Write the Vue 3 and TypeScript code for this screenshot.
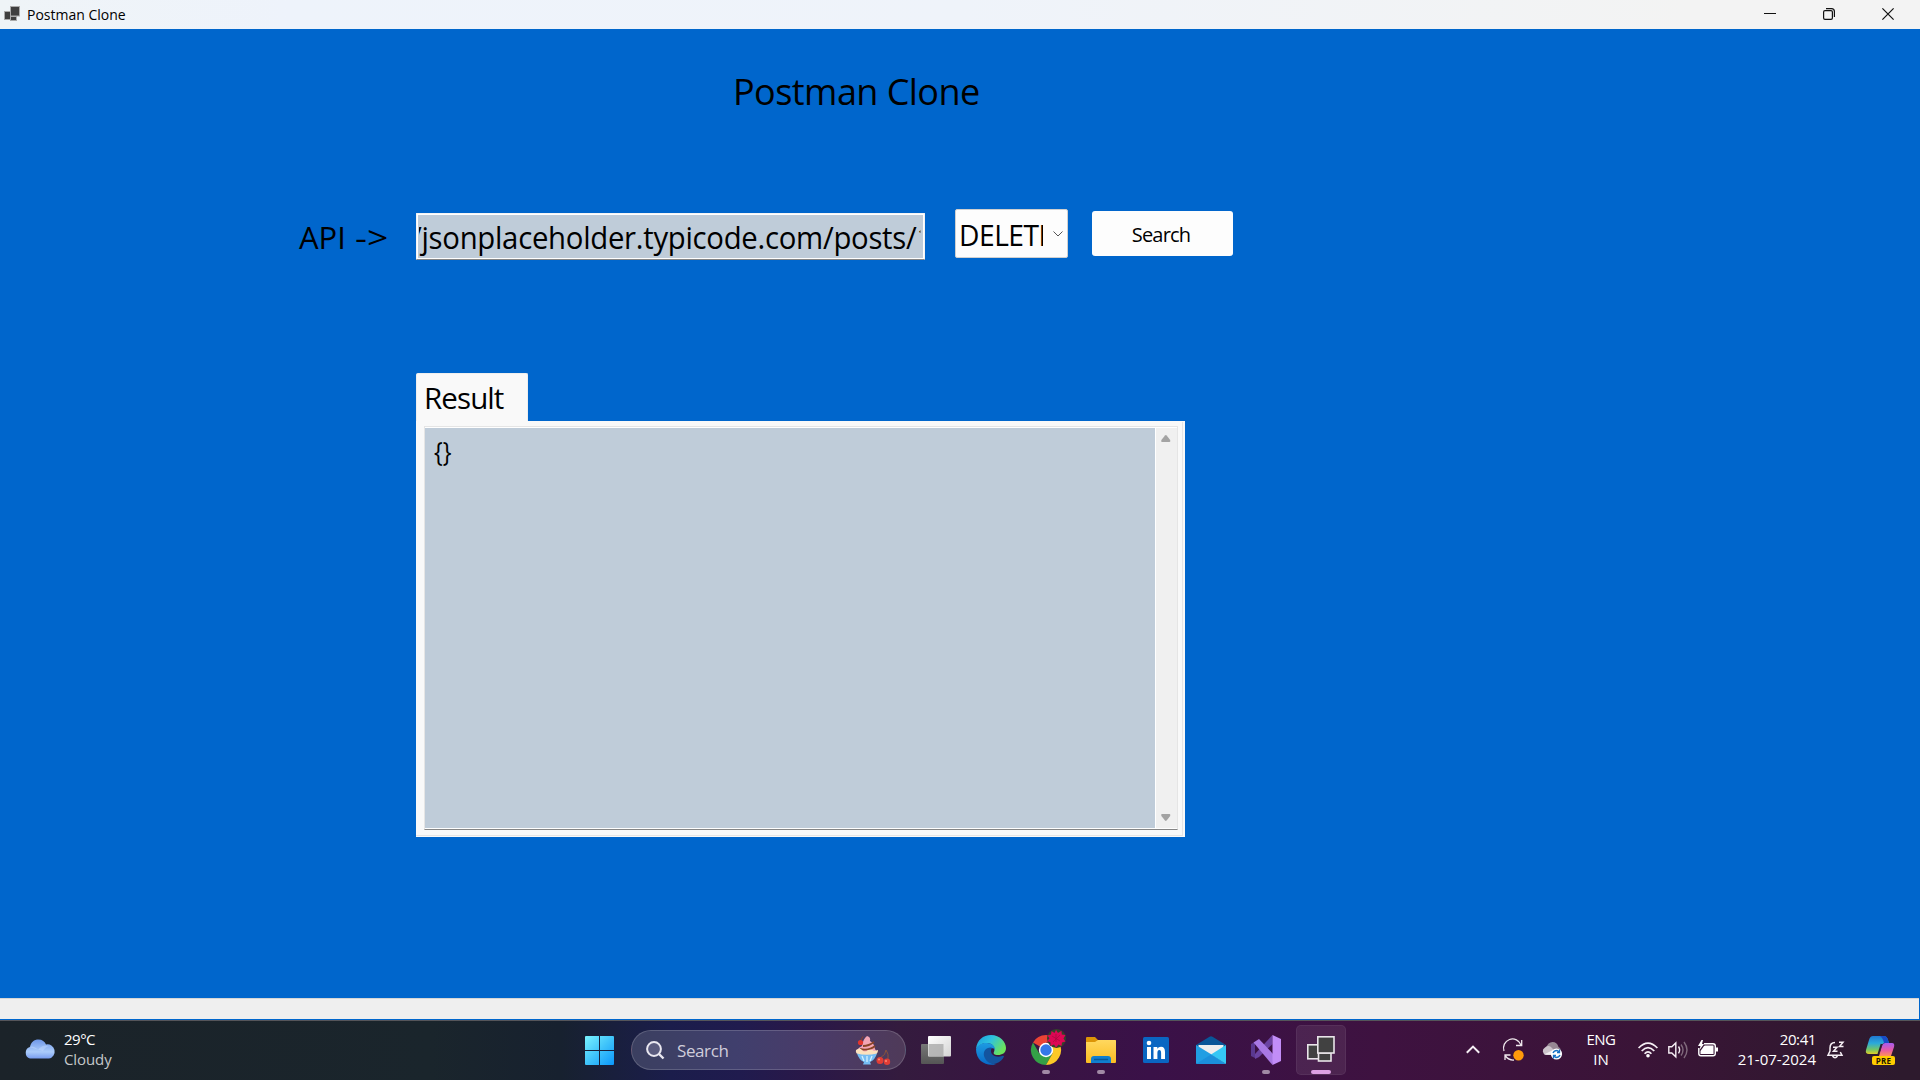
<script setup lang="ts">
import { ref } from 'vue'

const title = 'Postman Clone'
const endpoint = ref('/jsonplaceholder.typicode.com/posts/1')
const method = ref('DELETE')
const result = ref('{}')
</script>

<template>
  <div class="desktop">
    <header class="titlebar">
      <svg class="app-icon" width="17" height="16" viewBox="0 0 17 16">
        <g fill="#3f3f3f" stroke="#aaa" stroke-width="1">
          <rect x=".5" y="5.5" width="6" height="8" />
          <rect x="6.5" y=".5" width="9" height="9.5" />
          <rect x="6.5" y="10.5" width="6" height="4" />
        </g>
      </svg>
      <span class="window-title">{{ title }}</span>
      <div class="window-buttons">
        <svg width="12" height="12" viewBox="0 0 12 12"><path d="M0 5.5H12" stroke="#111" /></svg>
        <svg width="12" height="12" viewBox="0 0 12 12" fill="none" stroke="#111">
          <rect x=".6" y="2.6" width="8.8" height="8.8" rx="1.4" stroke-width="1.2" />
          <path d="M3 .6H8.5Q11.4.6 11.4 3.5V9" stroke-width="1.2" />
        </svg>
        <svg width="12" height="12" viewBox="0 0 12 12"><path d="M.4.4 11.6 11.6M11.6.4.4 11.6" stroke="#111" stroke-width="1.2" /></svg>
      </div>
    </header>

    <main class="form">
      <h1>{{ title }}</h1>
      <div class="request">
        <label class="api">API <span class="arrow">-&gt;</span></label>
        <div class="url"><span>{{ endpoint }}</span></div>
        <div class="method">
          <div class="method-text"><span>{{ method }}</span></div>
          <svg width="10" height="6" viewBox="0 0 10 6" fill="none" stroke="#555"><path d="M.5.5 5 5 9.5.5" /></svg>
        </div>
        <button class="go">Search</button>
      </div>
      <section class="tabs">
        <div class="tab"><span>Result</span></div>
        <div class="page">
          <div class="page-line">
            <div class="output">
              <div class="text"><span>{{ result }}</span></div>
              <div class="scroll">
                <svg width="10" height="7" viewBox="0 0 10 7"><path d="M4 .5Q4.8-.3 5.6.5L9.2 5Q9.6 7 8.6 7H.9Q-.2 7 .4 5Z" fill="#a3a3a3" /></svg>
                <svg width="10" height="7" viewBox="0 0 10 7"><path d="M4 6.5Q4.8 7.3 5.6 6.5L9.2 2Q9.6 0 8.6 0H.9Q-.2 0 .4 2Z" fill="#a3a3a3" /></svg>
              </div>
            </div>
          </div>
        </div>
      </section>
    </main>
    <div class="status"></div>

    <footer class="taskbar">
      <div class="weather">
        <svg width="31" height="20" viewBox="0 0 31 20">
          <defs>
            <linearGradient id="cl" x1="0" y1="0" x2="0" y2="1"><stop offset="0" stop-color="#6f97e8" /><stop offset=".65" stop-color="#abccfb" /><stop offset="1" stop-color="#789df0" /></linearGradient>
          </defs>
          <path d="M6 19.5A6 6 0 0 1 6 8C7 3 10 .5 14.500.5 18 .5 21 2.500 22 5.500A7 7 0 0 1 25 19.500Z" fill="url(#cl)" />
          <path d="M5 8Q10 6 14 11Q18 5 25 7Q21 8 19 12Z" fill="#c5dcff" opacity=".45" />
        </svg>
        <div class="weather-text"><span class="temp">29°C</span><span class="sky">Cloudy</span></div>
      </div>

      <div class="start">
        <svg width="29" height="29" viewBox="0 0 29 29">
          <defs><linearGradient id="win" x1="0" y1="0" x2="29" y2="29" gradientUnits="userSpaceOnUse"><stop stop-color="#7af3ff" /><stop offset=".5" stop-color="#40c4fa" /><stop offset="1" stop-color="#0b97fb" /></linearGradient></defs>
          <path d="M1 0H14V14H0V1Q0 0 1 0ZM15 0H28Q29 0 29 1V14H15ZM0 15H14V29H1Q0 29 0 28ZM15 15H29V28Q29 29 28 29H15Z" fill="url(#win)" />
        </svg>
      </div>

      <div class="search">
        <svg class="lens" width="19" height="19" viewBox="0 0 19 19" fill="none" stroke="#e9e7f0" stroke-width="2">
          <circle cx="8" cy="8" r="6.900" fill="#77779a" fill-opacity=".5" /><path d="M13 13 17.500 17.500" stroke-width="2.400" />
        </svg>
        <span>Search</span>
        <svg class="sundae" width="36" height="29" viewBox="0 0 36 29">
          <path d="M7 10Q8 3 12 0Q16 1 15 5Q19 7 20 13Q22 15 21 17H2Q1 13 7 10Z" fill="#f3a5b4" />
          <path d="M8 10Q14 10 19 6M5 13Q14 15 20 10" stroke="#8a4426" stroke-width="1.800" fill="none" />
          <path d="M1 14Q5 11 7 14Q10 17 13 14Q17 13 19 15L23 14Q23 19 18 19H5Q0 18 1 14Z" fill="#fbe1bd" />
          <path d="M2 17.500Q11 20 22 17.500Q20 24 15 26L16 28.500H8L9 26Q4 24 2 17.500Z" fill="#75bdf3" />
          <path d="M7 20 9 25M12 20V26M17 20 15 25" stroke="#d1f0ff" stroke-width="1.300" />
          <circle cx="5.500" cy="6.500" r="2.600" fill="#e3352d" /><path d="M6 4 8 .5" stroke="#8d4327" />
          <path d="M25 22Q31 19 31 14Q34 18 33 23" fill="none" stroke="#89533c" stroke-width="1" />
          <circle cx="25" cy="24.500" r="3.500" fill="#e13d35" /><circle cx="32" cy="25.800" r="3.200" fill="#e13d35" />
          <circle cx="24" cy="23.500" r="1" fill="#ff8976" /><circle cx="31" cy="25" r="1" fill="#ff8976" />
        </svg>
      </div>

      <div class="apps">
        <div class="cell">
          <svg width="30" height="28" viewBox="0 0 30 28">
            <defs><linearGradient id="tv" x1="0" y1="0" x2="1" y2="1"><stop stop-color="#fff" /><stop offset="1" stop-color="#d4d4d4" /></linearGradient>
            <linearGradient id="tg" x1="0" y1="0" x2="0" y2="1"><stop stop-color="#777" /><stop offset="1" stop-color="#555" /></linearGradient></defs>
            <rect y="8" width="23" height="20" rx="1" fill="url(#tg)" /><rect x="7" width="23" height="20.500" rx="1" fill="url(#tv)" /><path d="M7.500 8H22.500V20.500H7.500Z" fill="#aaa" opacity=".8" />
          </svg>
        </div>
        <div class="cell">
          <svg width="30" height="30" viewBox="0 0 30 30">
            <defs>
              <linearGradient id="e1" x1="0" y1="0" x2="1" y2=".5"><stop stop-color="#189be0" /><stop offset=".5" stop-color="#2fc2df" /><stop offset="1" stop-color="#6be35c" /></linearGradient>
              <linearGradient id="e2" x1="0" y1="0" x2="0" y2="1"><stop stop-color="#1d9be2" /><stop offset="1" stop-color="#0868c6" /></linearGradient>
            </defs>
            <path d="M0 14C1 5 7 0 15 0 24 0 30 7 30 13 30 18 26 20 22 20 18 20 17 18.500 18 17 20 12 16 8 11 8 6 8 2 11 0 14Z" fill="url(#e1)" />
            <path d="M0 14C2 10 6 7.500 11 8 16 8 19 11 19 14.500 17 12 11 13 10 18 9 24 14 29 20 29 12 32 0 27 0 14Z" fill="url(#e2)" />
            <path d="M15.500 12.500C10 12 7 16 8 21 10 27 15 30 20 28.500 24 27 27 24 28 21.500 28 20.500 27 20.500 26 21 20 23 15 20 15 16 15 14 16 13 15.500 12.500Z" fill="#13549f" />
          </svg>
        </div>
        <div class="cell">
          <svg class="chrome" width="36" height="36" viewBox="0 0 36 36">
            <path d="M15 21 2 13.500A15 15 0 0 1 28 13.500H15Z" fill="#ea4335" />
            <path d="M2 13.500A15 15 0 0 0 15 36L21.500 24.500 15 21 8.500 24.700Z" fill="#34a047" />
            <path d="M28 13.500A15 15 0 0 1 15 36L21.500 24.500 17 13.500Z" fill="#fcc927" />
            <circle cx="15" cy="21" r="7.200" fill="#fff" /><circle cx="15" cy="21" r="5.700" fill="#3478e8" />
            <circle cx="25.500" cy="9.500" r="9.500" fill="#344329" />
            <path d="M25 .8 27 4 30.500 1.800 30.800 5.500 34.500 6 32.500 9.500 34.500 12.500 31 13.500 30.500 17 27.500 15.500 25 18.500 23 15.500 19.500 17 19.500 13.500 16.300 12 18.500 9.300 16.500 6.500 20 5.500 20.500 2 23.500 4Z" fill="#dc0754" />
            <path d="M25 5V13M21 7 29 12M29 6 22 13" stroke="#a80a3c" stroke-width=".7" />
          </svg>
          <i class="dot"></i>
        </div>
        <div class="cell">
          <svg width="30" height="27" viewBox="0 0 30 27">
            <defs><linearGradient id="fo" x1="0" y1="0" x2="0" y2="1"><stop stop-color="#ffd85f" /><stop offset="1" stop-color="#fbbd21" /></linearGradient></defs>
            <path d="M0 1Q0 0 1 0H9L12 3H29Q30 3 30 4V9H0Z" fill="#dc9507" /><path d="M0 5H9L12 3H29Q30 3 30 4V25Q30 26 29 26H1Q0 26 0 25Z" fill="url(#fo)" />
            <path d="M5 26V22Q5 19 8 19H22Q25 19 25 22V26Z" fill="#107fcf" /><path d="M8 22.500H22" stroke="#075999" stroke-width="1.500" />
          </svg>
          <i class="dot"></i>
        </div>
        <div class="cell">
          <svg width="26" height="26" viewBox="0 0 26 26">
            <rect width="26" height="26" rx="1.500" fill="#0a66c2" />
            <circle cx="6" cy="6" r="2.300" fill="#fff" /><path d="M4 10H8V22H4ZM10.500 10H14.300V11.700Q15.500 9.700 18 9.700 22 9.700 22 15V22H18.100V16Q18.100 13.100 16.300 13.100 14.400 13.100 14.400 16V22H10.500Z" fill="#fff" />
          </svg>
        </div>
        <div class="cell">
          <svg width="30" height="28" viewBox="0 0 30 28">
            <path d="M0 9 13.500.7Q15-.3 16.500.7L30 9V14H0Z" fill="#095698" /><path d="M2.500 9H27.500V15L15 20 2.500 13Z" fill="#eee" />
            <path d="M0 9 18 20 30 28H1Q0 28 0 27Z" fill="#219ee3" /><path d="M30 9V28L15 18.500Z" fill="#35c7f5" /><path d="M0 28H29L15 18.500Z" fill="#1b8fdb" />
          </svg>
        </div>
        <div class="cell">
          <svg width="30" height="30" viewBox="0 0 30 30">
            <path d="M0 9 4 7V23L0 21Z" fill="#5a3890" />
            <path d="M4 23V19L21.500 0V9L8 22 4 24Z" fill="#6b43a2" />
            <path d="M2.500 7.500 8 4 23 20 21.500 30Z" fill="#a878e4" />
            <path d="M21.500 0 30 4V26L21.500 30Z" fill="#c28df8" />
          </svg>
          <i class="dot"></i>
        </div>
        <div class="cell active">
          <svg width="28" height="26" viewBox="0 0 28 26" fill="#414141" stroke="#e9e5e9" stroke-width="1.600">
            <rect x=".8" y="8.800" width="11" height="14" /><rect x="11.500" y="17" width="12.500" height="8" /><rect x="10.800" y=".8" width="16.200" height="16.200" />
          </svg>
          <i class="dot long"></i>
        </div>
      </div>

      <div class="tray">
        <svg class="t-up" width="14" height="9" viewBox="0 0 14 9" fill="none" stroke="#f5eef4" stroke-width="2"><path d="M.8 7.800 7 1.600 13.200 7.800" /></svg>
        <svg class="t-sync" width="21" height="21" viewBox="0 0 21 21" fill="none" stroke="#efe8ed" stroke-width="1.300">
          <path d="M1 11A8.800 8.800 0 0 1 18 5M18.700 0V5.500H13M2 20V15H7.500M2.500 16Q6 20.500 11 20" /><circle cx="15.500" cy="15.200" r="5.200" fill="#ff9b0a" stroke="none" />
        </svg>
        <svg class="t-cloud" width="21" height="18" viewBox="0 0 21 18">
          <path d="M4 6Q6 0 10.500 0 15 0 16.500 5 19 6 19 10H3Z" fill="#968894" /><path d="M4 13A4 4 0 0 1 3 5.500Q7 2.500 10 6L15 12V13Z" fill="#cbc3ca" /><path d="M2 12.500 10 8.500 15 13Z" fill="#f1edf0" />
          <circle cx="14.500" cy="12" r="5.600" fill="#fff" /><path d="M11 11Q12 8.500 15 8.500L17.500 10M17.500 7.500V10.500H15M18 13Q17 15.500 14 15.500L11.500 14M11.500 16.500V13.500H14" stroke="#1671c5" stroke-width="1.300" fill="none" />
        </svg>
        <div class="lang"><span class="eng">ENG</span><span class="in">IN</span></div>
        <svg class="t-wifi" width="20" height="16" viewBox="0 0 20 16" fill="none" stroke="#f5eef4" stroke-width="1.700">
          <path d="M.6 6Q10-3.800 19.400 6M3.700 9Q10 2.200 16.300 9M6.600 11.800Q10 8 13.400 11.800" /><circle cx="10" cy="13.700" r="1.800" fill="#fff" stroke="none" />
        </svg>
        <svg class="t-vol" width="21" height="18" viewBox="0 0 21 18" fill="none" stroke="#f5eef4" stroke-width="1.400">
          <path d="M.8 5.800H3.800L7.800 2V15.800L3.800 12H.8ZM10.500 5.500Q12.800 9 10.500 12.300" /><path d="M13 3.500Q17 9 13 14.500M16 1Q22 9 16 17" stroke="#806a7c" />
        </svg>
        <svg class="t-bat" width="21" height="18" viewBox="0 0 21 18">
          <path d="M6 3.700H15Q17.300 3.700 17.300 6V13.500Q17.300 15.800 15 15.800H3Q.8 15.800.8 13.500V8" fill="none" stroke="#fff" stroke-width="1.400" /><path d="M7 5.500H15.500V14H2.500V11L6 6Z" fill="#fff" /><path d="M18 7.500H20V11.500H18ZM3.500 0 0 6H2.500L1.500 10 6 4H4L5 0Z" fill="#fff" />
        </svg>
        <div class="clock"><span class="time">20:41</span><span class="date">21-07-2024</span></div>
        <svg class="t-bell" width="18" height="18" viewBox="0 0 18 18" fill="none" stroke="#f5eef4" stroke-width="1.500">
          <path d="M8 1.500Q3 1.500 3 7V10L1 14.300H15L13.300 11M5.500 15Q8 18.500 10.500 15" /><path d="M6 6.300H10L6.500 10.300H10.500M12 1.200H16L12.500 5.600H16.500" />
        </svg>
        <div class="copilot">
          <svg width="30" height="29" viewBox="0 0 30 29">
            <defs><linearGradient id="c1" x1="0" y1="0" x2="0" y2="1"><stop stop-color="#2078d0" /><stop offset=".4" stop-color="#2aa9dc" /><stop offset=".75" stop-color="#72c568" /><stop offset="1" stop-color="#e2cf27" /></linearGradient>
            <linearGradient id="c2" x1="0" y1="0" x2="0" y2="1"><stop stop-color="#a55cf0" /><stop offset=".55" stop-color="#e85aa4" /><stop offset="1" stop-color="#ff9258" /></linearGradient></defs>
            <path d="M7 0H18Q21 0 22 4L23 7H19Q16 7 15 11L13 18H3Q-1 18 0 14L3 4Q4 0 7 0Z" fill="url(#c1)" /><path d="M14 0H18Q21 0 22 4L23 7H18Q17 2 14 0Z" fill="#184bc7" /><path d="M19 7H26Q29 7 28 11L25 20H13L16 10Q17 7 19 7Z" fill="url(#c2)" /><path d="M15.500 8 12 19" stroke="#2d1a2d" stroke-width="1.600" />
          </svg>
          <b>PRE</b>
        </div>
      </div>
    </footer>
  </div>
</template>

<style>
html, body { margin: 0; overflow: hidden; }
</style>

<style scoped>
* { box-sizing: border-box; }
.desktop { width: 1920px; height: 1080px; display: flex; flex-direction: column; font-family: "Open Sans", "Noto Sans", sans-serif; background: #0066cc; overflow: hidden; color: #000; }
svg { display: block; flex: none; overflow: visible; }
span { white-space: nowrap; }
.titlebar { height: 29px; flex: none; display: flex; padding-left: 4px; background: linear-gradient(90deg, #eff4f7, #eef3fb 15%, #eff3fa 50%, #f3f3f3 88%); }
.app-icon { margin-top: 6px; }
.window-title { margin-left: 6px; font-size: 14px; line-height: 29px; }
.window-buttons { margin-left: auto; margin-right: 26px; display: flex; gap: 47px; padding-top: 8px; }
.form { height: 969px; flex: none; padding-top: 33px; background: #0066cc; }
h1 { margin: 0 0 0 733px; height: 60px; font-size: 36px; line-height: 60px; font-weight: 400; letter-spacing: -0.55px; white-space: nowrap; }
.request { margin-top: 87px; padding-left: 299px; height: 51px; display: flex; align-items: flex-start; }
.api { width: 117px; margin-top: 8px; font-size: 31px; line-height: 40px; white-space: nowrap; }
.arrow { display: inline-block; margin-left: 1px; transform: scaleX(1.2); transform-origin: left; }
.url { width: 509px; height: 47px; margin-top: 4px; padding: 1px 2px 0; border: 1px solid #f4f4f4; border-bottom-color: #858585; box-shadow: inset 0 0 0 1px #fff; background: #bfccd9; border-radius: 1px; }
.url span { display: block; overflow: hidden; text-indent: -8px; width: 530px; font-size: 31px; line-height: 45px; height: 42px; letter-spacing: -0.3px; transform: scaleX(.946); transform-origin: left; }
.method { width: 113px; height: 49px; margin-left: 30px; display: flex; align-items: center; background: #fdfdfd; border: 1px solid #d0d0d0; border-radius: 2px; }
.method-text { margin-left: 3px; width: 84px; overflow: hidden; font-size: 29.5px; line-height: 50px; height: 47px; letter-spacing: -0.5px; }
.method-text span { display: inline-block; transform: scaleX(.955); transform-origin: left; }
.method svg { margin-left: 10px; }
.go { margin: 2px 0 0 24px; width: 141px; height: 45px; border: 0; border-radius: 3px; background: #fdfdfd; font: 20px/45px "Open Sans", sans-serif; padding: 1px 3px 0 0; letter-spacing: -0.8px; color: #000; }
.tabs { margin: 113px 0 0 416px; width: 769px; }
.tab { width: 112px; height: 48px; padding-left: 7px; background: #f9f9f9; border: 1px solid #eee; border-bottom: 0; border-radius: 2px 2px 0 0; font-size: 29.500px; line-height: 48px; letter-spacing: -0.9px; }
.page { height: 416px; padding: 1px 2px 1px 0; background: #f9f9f9; }
.page-line { height: 414px; padding: 4px 4px 7px 8px; border-right: 1px solid #e5e5e5; border-bottom: 1px solid #e5e5e5; }
.output { height: 404px; display: flex; background: #bfccd9; border: 1px solid #e5e5e5; border-bottom-color: #858585; box-shadow: inset 0 1px #fff, inset 0 -1px #fff; }
.text { flex: 1; padding: 6px 0 0 9px; font-size: 28px; line-height: 36px; }
.text span { display: inline-block; transform: scaleX(.83); transform-origin: left; }
.scroll { width: 22px; margin: 1px 0; border-left: 1px solid #fff; background: #f0f0f0; display: flex; flex-direction: column; justify-content: space-between; padding: 7px 0 7px 5px; }
.status { width: 1919px; height: 21px; flex: none; background: #efefef; border-top: 1px solid #d6d6d6; }
.taskbar { margin-top: 1px; height: 60px; flex: none; display: flex; border-top: 1px solid #55555a; color: #fff; background: linear-gradient(90deg, #1b2329 0, #1a252c 430px, #17212f 560px, #1b1d4b 670px, #201b4e 740px, #2a1848 810px, #341b3e 900px, #381541 1000px, #3a1148 1150px, #3e1240 1380px, #3a1437 1640px, #2d1a2d 1900px); }
.weather { width: 585px; display: flex; padding-left: 24px; }
.weather > svg { margin-top: 18px; }
.weather-text { margin-left: 9px; padding-top: 8px; display: flex; flex-direction: column; font-size: 15px; line-height: 20px; }
.temp { letter-spacing: -0.5px; }
.sky { color: #c4c7c9; letter-spacing: -0.1px; }
.start { width: 46px; padding-top: 15px; }
.search { width: 275px; height: 40px; margin-top: 9px; display: flex; padding-left: 14px; border: 1px solid rgba(255,255,255,.17); border-radius: 20px; background: linear-gradient(90deg, #3b3f60, #403f6d 38%, #4a3b68 68%, #4f3a59); font-size: 17px; line-height: 39px; color: #d0cddb; }
.lens { margin-top: 10px; margin-right: 12px; }
.search span { letter-spacing: -0.4px; }
.sundae { margin: 5px 14px 0 auto; }
.apps { display: flex; margin-left: 3px; }
.cell { width: 50px; height: 50px; margin: 4px 3px 0 2px; display: flex; align-items: center; justify-content: center; position: relative; border-radius: 5px; border: 1px solid transparent; }
.cell.active { background: rgba(255,255,255,.08); border-color: rgba(255,255,255,.06); }
.cell.active svg { margin-top: -2px; }
.chrome { margin: -6px 0 0 6px; }
.dot { position: absolute; bottom: 0; left: 20px; width: 8px; height: 4px; border-radius: 2px; background: #a18aa5; }
.dot.long { width: 20px; left: 14px; background: #dda0e3; }
.tray { display: flex; flex: 1; }
.t-up { margin: 24px 0 0 117px; }
.t-sync { margin: 19px 0 0 23px; }
.t-cloud { margin: 21px 0 0 18px; }
.lang { width: 50px; margin-left: 13px; padding-top: 8px; display: flex; flex-direction: column; align-items: center; font-size: 15px; line-height: 20px; }
.eng { letter-spacing: -0.5px; }
.t-wifi { margin: 21px 0 0 12px; }
.t-vol { margin: 20px 0 0 10px; }
.t-bat { margin: 19px 0 0 9px; }
.clock { width: 97px; padding-top: 8px; display: flex; flex-direction: column; align-items: flex-end; font-size: 15px; line-height: 20px; }
.time { letter-spacing: -0.4px; }
.date { letter-spacing: 0; }
.t-bell { margin: 20px 0 0 11px; }
.copilot { margin: 15px 0 0 21px; position: relative; }
.copilot b { position: absolute; left: 6px; top: 20px; width: 23px; height: 9px; border-radius: 2px; background: #ffcd00; color: #211700; font-size: 8px; line-height: 9px; letter-spacing: .3px; text-align: center; }
</style>
